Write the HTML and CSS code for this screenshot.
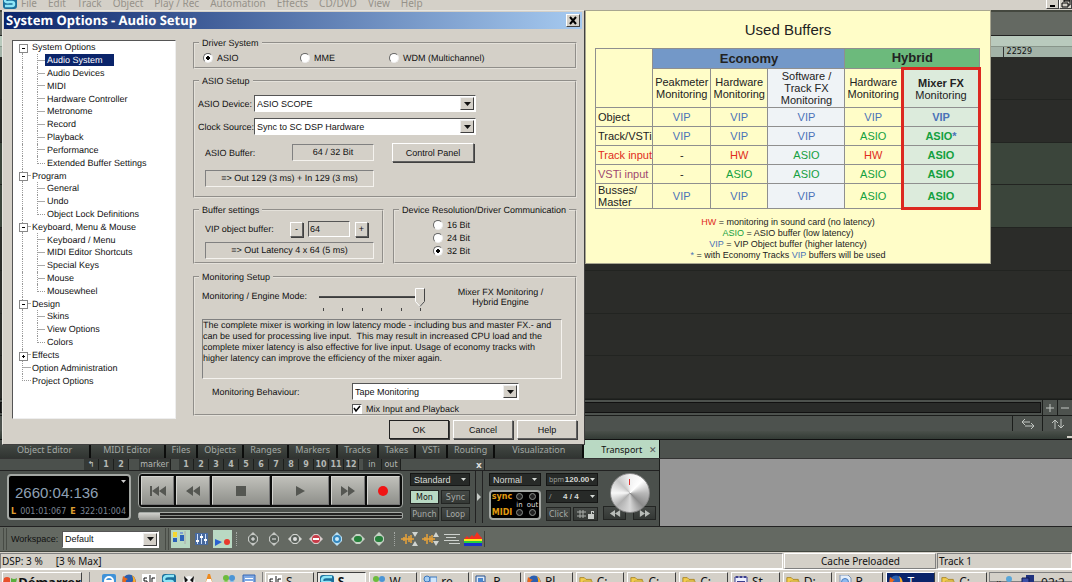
FILE: index.html
```html
<!DOCTYPE html>
<html lang="en">
<head>
  <meta charset="UTF-8" />
  <meta name="viewport" content="width=device-width, initial-scale=1.0" />
  <title>System Options - Audio Setup</title>
  <link rel="stylesheet" href="styles.css">
</head>
<body>
  <svg class="defs" aria-hidden="true">
    <symbol id="i-samp" viewBox="0 0 14 14"><rect width="14" height="14" rx="3" fill="#1b6f9c"/><path d="M12 2H6Q2 2 2 5t4 2h3q2 0 2 2t-2 2H2" fill="none" stroke="#8fe6f7" stroke-width="2.5"/></symbol>
    <symbol id="i-folder" viewBox="0 0 16 14"><path d="M1 13V2h5l2 2h6v9z" fill="#f3cd4e" stroke="#a8811c"/><path d="M3 13l2-7h10l-2 7z" fill="#fdf0a0" stroke="#b8922c"/></symbol>
    <symbol id="i-fox" viewBox="0 0 14 14"><circle cx="7" cy="7" r="6.5" fill="#2b5fb0"/><path d="M1 2q-2 8 3 11 6 2 9-3 2-5-2-8 1 4-1 6-3 3-6 0Q3 6 6 5 3 4 1 2z" fill="#e8671b"/><path d="M10 1q4 3 3 8l-2 2q1-5-1-10z" fill="#f7b22e"/></symbol>
    <symbol id="i-people" viewBox="0 0 14 14"><circle cx="4" cy="4" r="3" fill="#6dbb3d"/><path d="M0 14q0-7 4-7t5 7z" fill="#8fd05c"/><circle cx="10" cy="4" r="3" fill="#4b95d6"/><path d="M5 14q1-7 5-7t4 7z" fill="#7fbcec"/></symbol>
    <symbol id="i-chat" viewBox="0 0 14 14"><circle cx="4" cy="4" r="3" fill="#a6cdf2" stroke="#3b77bd"/><path d="M7 2h7v6h-4l-2 3V8H7z" fill="#cfe6fb" stroke="#3b77bd"/><path d="M0 14q0-6 4-6t5 6z" fill="#7fb2e6"/></symbol>
    <symbol id="i-pc" viewBox="0 0 14 14"><path d="M1 1h9v10H1z" fill="#dfeaf7" stroke="#27508f"/><path d="M3 3h5v5H3z" fill="#4a86cf"/><path d="M8 6l6 3-3 4-4-2z" fill="#27508f"/></symbol>
    <symbol id="i-note" viewBox="0 0 14 14"><path d="M1 2h12v12H1z" fill="#eef0ff" stroke="#3b3f8e"/><path d="M2 1h2v2H2zM6 1h2v2H6zM10 1h2v2h-2zM3 6h8v1H3zM3 9h8v1H3z" fill="#3b3f8e"/></symbol>
    <symbol id="i-doc" viewBox="0 0 14 14"><path d="M2 0h8l3 3v11H2z" fill="#e6effa" stroke="#7b93b5"/><circle cx="7" cy="7" r="3.5" fill="#8fbaf0" stroke="#4b7fc4"/></symbol>
    <symbol id="i-sc" viewBox="0 0 14 14"><path d="M0 0h14v14H0z" fill="#fff"/><path d="M5 4H2v3h3v4H1M8 1v11M13 4h-3v7h3" fill="none" stroke="#111"/></symbol>
    <symbol id="i-down" viewBox="0 0 7 4"><path d="M0 0h7L3.5 4z" fill="currentColor"/></symbol>
  </svg>

  <header class="menubar">
    <svg class="menu-logo" viewBox="0 5 14 9"><use href="#i-samp" width="14" height="14"/></svg>
    <nav>
      <a href="#">File</a><a href="#">Edit</a><a href="#">Track</a><a href="#">Object</a><a href="#">Play / Rec</a><a href="#">Automation</a><a href="#">Effects</a><a href="#">CD/DVD</a><a href="#">View</a><a href="#">Help</a>
    </nav>
    <button class="win-btn" aria-label="Minimize"><svg viewBox="0 0 12 8"><path d="M3 5h5v2H3z"/></svg></button>
    <button class="win-btn" aria-label="Restore"><svg viewBox="0 0 12 8"><path d="M4 0h6v5H8M4 0v2M4 1h6M2 3h6v4H2z" fill="none" stroke="#000"/></svg></button>
  </header>

  <main class="project">
    <div class="upper-bar"></div>
    <div class="ruler"></div>
    <div class="ruler marks"><span>22529</span></div>
    <div class="lanes">
      <div class="lane"></div>
      <div class="lane"></div>
      <div class="lane green"></div>
      <div class="lane green"></div>
      <div class="lane"></div>
      <div class="lane"></div>
      <div class="lane"></div>
      <div class="lane"></div>
    </div>
    <div class="scroll-row">
      <div class="scroll-slot"></div>
      <button aria-label="Zoom in"><svg viewBox="0 0 14 14"><path d="M7 3v8M3 7h8"/></svg></button>
      <button aria-label="Zoom out"><svg viewBox="0 0 14 14"><path d="M3 7h8"/></svg></button>
    </div>
    <div class="scroll-row tools">
      <div class="fill"></div>
      <button class="big" aria-label="Fit width"><svg viewBox="0 0 14 14"><path d="M9 5H1M4 2L1 5l3 3M4 9h9M10 6l3 3-3 3"/></svg></button>
      <button class="big" aria-label="Fit height"><svg viewBox="0 0 14 14"><path d="M4 12V3M1 6l3-3 3 3M10 2v9M7 8l3 3 3-3"/></svg></button>
    </div>
    <div class="splitter"><span></span></div>
  </main>

  <section class="dock">
    <nav class="tabs">
      <a class="wide" href="#">Object Editor</a><a class="mid" href="#">MIDI Editor</a><a href="#">Files</a><a href="#">Objects</a><a href="#">Ranges</a><a href="#">Markers</a><a href="#">Tracks</a><a href="#">Takes</a><a href="#">VSTi</a><a href="#">Routing</a><a class="wide" href="#">Visualization</a><a class="on" href="#">Transport <b>✕</b></a>
    </nav>
    <div class="transport">
      <div class="marker-row">
        <div class="marker-left">
          <button>↰</button><button>1</button><button>2</button>
          <button class="tag">marker</button>
          <button>1</button><button>2</button><button>3</button><button>4</button><button>5</button><button>6</button><button>7</button><button>8</button><button>9</button><button>10</button><button>11</button><button>12</button>
          <button class="io in">in</button><button class="io">out</button>
        </div>
        <button class="close" aria-label="Close">x</button>
        <div class="marker-right"></div>
      </div>
      <div class="deck">
        <div class="display">
          <div class="time">2660:04:136 <svg><use href="#i-down"/></svg></div>
          <div class="range"><b>L</b><span>001:01:067</span><b>E</b><span>322:01:004</span></div>
        </div>
        <div class="player">
          <div class="keys">
            <button aria-label="To start"><svg viewBox="0 0 18 12"><path d="M1 1h2v10H1zM10 1v10L3 6zM17 1v10l-7-5z"/></svg></button>
            <button aria-label="Rewind"><svg viewBox="0 0 18 12"><path d="M9 1v10L2 6zM16 1v10L9 6z"/></svg></button>
            <button class="long" aria-label="Stop"><svg viewBox="0 0 18 12"><path d="M4 1h10v10H4z"/></svg></button>
            <button class="long" aria-label="Play"><svg viewBox="0 0 18 12"><path d="M5 1v10l9-5z"/></svg></button>
            <button aria-label="Forward"><svg viewBox="0 0 18 12"><path d="M2 1v10l7-5zM9 1v10l7-5z"/></svg></button>
            <button aria-label="Record"><svg viewBox="0 0 18 12"><circle cx="9" cy="6" r="5" fill="#f01414"/></svg></button>
          </div>
          <div class="shuttle"><span></span></div>
        </div>
        <div class="modes">
          <label class="dark-combo"><select aria-label="Play mode"><option>Standard</option></select><svg><use href="#i-down"/></svg></label>
          <button class="lit">Mon</button><button>Sync</button>
          <button>Punch</button><button>Loop</button>
        </div>
        <button class="gutter" aria-label="Expand"><svg viewBox="0 0 4 8"><path d="M0 0v8l4-4z"/></svg></button>
        <div class="sync">
          <label class="dark-combo"><select aria-label="Speed"><option>Normal</option></select><svg><use href="#i-down"/></svg></label>
          <div class="leds">
            <b>sync</b><i></i><i></i>
            <small></small><small>in</small><small>out</small>
            <b>MIDI</b><i></i><i></i>
          </div>
        </div>
        <div class="tempo">
          <div class="readout"><small>bpm</small> 120.00 <svg><use href="#i-down"/></svg></div>
          <div class="readout"><small>/</small> 4 / 4 <svg><use href="#i-down"/></svg></div>
          <div class="pair">
            <button>Click</button>
            <button aria-label="Grid lock"><svg viewBox="0 0 18 10"><path d="M3 1v8M6 1v8M0 3h9M0 7h9" fill="none" stroke="#aaaeaa"/><path d="M11 5h6v5h-6zM14 5V2h3v2h-1V3h-1v2z" fill="#c8ccc8"/></svg></button>
          </div>
        </div>
        <div class="jog">
          <div class="knob"><span></span></div>
          <div class="pair">
            <button aria-label="Nudge left"><svg viewBox="0 0 14 8"><path d="M7 0v8L1 4zM13 0v8L7 4z"/></svg></button>
            <button aria-label="Nudge right"><svg viewBox="0 0 14 8"><path d="M1 0v8l6-4zM7 0v8l6-4z"/></svg></button>
          </div>
        </div>
      </div>
    </div>
  </section>

  <section class="toolbar">
    <span class="grip"></span>
    <label for="workspace">Workspace:</label>
    <div class="combo workspace"><select id="workspace"><option>Default</option></select><span class="arrow"><svg><use href="#i-down"/></svg></span></div>
    <span class="grip"></span>
    <div class="views">
      <button class="lit" aria-label="Workspace view"><svg viewBox="0 0 19 18"><path d="M2 2h4v5H2z" fill="#f5d730"/><path d="M2 8h4v4H2zM9 5h4v6H9z" fill="#2c62b8"/><path d="M9 2h3v2H9z" fill="#7fa0d0"/><path d="M14 1v13" stroke="#aaa"/></svg></button>
      <button aria-label="Mixer"><svg viewBox="0 0 19 18"><path d="M3 3h13v12H3z" fill="#47699e"/><path d="M5.5 4v10M9.5 4v10M13.5 4v10" stroke="#cfe0fa"/><path d="M4 10h3v2H4zM8 6h3v2H8zM12 9h3v2h-3z" fill="#fff"/></svg></button>
      <button class="lit" aria-label="Transport"><svg viewBox="0 0 19 18"><path d="M2 9v7l7-4z" fill="#2a62d0"/><circle cx="14" cy="12" r="3" fill="#e8392c"/></svg></button>
    </div>
    <span class="dots"></span>
    <div class="zooms">
      <button aria-label="Zoom in vertically"><svg viewBox="0 0 14 14"><path d="M7 0l5 5v4l-5 5-5-5V5z" fill="#c5c8c4"/><circle cx="7" cy="7" r="4" fill="#59605a"/><path d="M7 5v4M5 7h4" stroke="#eee"/></svg></button>
      <button aria-label="Zoom out vertically"><svg viewBox="0 0 14 14"><path d="M7 0l5 5v4l-5 5-5-5V5z" fill="#c5c8c4"/><circle cx="7" cy="7" r="4" fill="#59605a"/><path d="M5 7h4" stroke="#eee"/></svg></button>
      <button aria-label="Show all"><svg viewBox="0 0 14 14"><path d="M0 7l5-5h4l5 5-5 5H5z" fill="#d2d4d0"/><circle cx="7" cy="7" r="4" fill="#59605a"/><circle cx="7" cy="7" r="2" fill="#ddd"/></svg></button>
      <button aria-label="Zoom range"><svg viewBox="0 0 14 14"><path d="M0 7l5-5h4l5 5-5 5H5z" fill="#d8cccb"/><circle cx="7" cy="7" r="4" fill="#c83b48"/><path d="M4 7h6" stroke="#fff" stroke-width="2"/></svg></button>
      <button aria-label="Zoom object"><svg viewBox="0 0 14 14"><path d="M7 0l5 5v4l-5 5-5-5V5z" fill="#b9dff2"/><circle cx="7" cy="7" r="4" fill="#3487bd"/><circle cx="7" cy="7" r="2" fill="#cdeaf8"/></svg></button>
      <button aria-label="Undo zoom"><svg viewBox="0 0 14 14"><path d="M0 7l5-5h4l5 5-5 5H5z" fill="#c5d0c4"/><rect x="3" y="4" width="8" height="6" rx="3" fill="#26803b"/></svg></button>
      <button aria-label="Redo zoom"><svg viewBox="0 0 14 14"><path d="M7 0l5 5v4l-5 5-5-5V5z" fill="#c5d0c4"/><rect x="3" y="4" width="8" height="6" rx="3" fill="#26803b"/></svg></button>
    </div>
    <span class="dots"></span>
    <div class="waves">
      <button aria-label="Wave zoom out"><svg viewBox="0 0 18 16"><path d="M0 8h13M3 6v4M5 3v10M8 5v6M10 4v8" stroke="#e8a33a" stroke-width="1.5"/><path d="M11 1h6l-3 5zM11 15h6l-3-5z" fill="#d0d4d0"/></svg></button>
      <button aria-label="Wave zoom in"><svg viewBox="0 0 18 16"><path d="M0 8h13M3 6v4M5 3v10M8 5v6M10 4v8" stroke="#e8a33a" stroke-width="1.5"/><path d="M11 6h6l-3-5zM11 10h6l-3 5z" fill="#d0d4d0"/></svg></button>
      <button aria-label="Tracks"><svg viewBox="0 0 18 16"><path d="M1 3.5h16M3 6.5h10M1 9.5h15M6 12.5h11" stroke="#cdd1cd"/></svg></button>
      <button aria-label="Spectrum"><svg viewBox="0 0 18 16"><path d="M0 8l3-3 2 2 3-3 2 2 3-5 3 4 2 2v3H0z" fill="#f03020"/><path d="M0 8h18v2H0z" fill="#ffe81c"/><path d="M0 10h18v3H0z" fill="#28d03c"/><path d="M0 12h18v3H0z" fill="#1a30c8"/></svg></button>
    </div>
  </section>

  <footer class="status">
    <div class="cell main"><span>DSP: 3 %</span><span>[3 % Max]</span></div>
    <div class="cell raised">Cache Preloaded</div>
    <div class="cell track">Track 1</div>
  </footer>

  <footer class="taskbar">
    <button class="start"><svg viewBox="0 0 14 14"><path d="M1 3q3-2 6 0v5Q4 6 0 8z" fill="#e8502a"/><path d="M8 3q3 2 6 0l-1 5q-3 2-5 0z" fill="#5aae3c"/><path d="M0 9q3-2 6 0v5H0z" fill="#2f6fd0"/><path d="M7 9q3 2 6 0v5H7z" fill="#f2c02c"/></svg>Démarrer</button>
    <div class="quick">
      <svg viewBox="0 0 14 14"><rect width="14" height="14" rx="2" fill="#3f92d8"/><circle cx="7" cy="7" r="4" fill="none" stroke="#fff" stroke-width="2"/><path d="M4 7h7" stroke="#fff" stroke-width="2"/></svg>
      <svg><use href="#i-fox"/></svg>
      <svg><use href="#i-sc"/></svg>
      <svg><use href="#i-samp"/></svg>
      <svg viewBox="0 0 14 14"><circle cx="7" cy="8" r="6" fill="#f4f4f4"/><path d="M2 2l4 4-3 3zM12 2L8 6l3 3z" fill="#111"/></svg>
      <svg viewBox="0 0 14 14"><path d="M6 0h2l4 14H2z" fill="#ee8a1e"/><path d="M5 5h4l1 3H4z" fill="#fff"/></svg>
      <svg><use href="#i-people"/></svg>
      <svg viewBox="0 0 14 14"><path d="M1 1h12v13H1z" fill="#7fa9e4" stroke="#3968b4"/><path d="M3 4h8v1H3zM3 7h8v1H3z" fill="#fff"/></svg>
    </div>
    <div class="tasks">
      <button><svg><use href="#i-sc"/></svg>S</button>
      <button class="down"><svg><use href="#i-samp"/></svg>S</button>
      <button><svg><use href="#i-people"/></svg>W</button>
      <button><svg><use href="#i-chat"/></svg>re</button>
      <button><svg><use href="#i-pc"/></svg>P</button>
      <button><svg><use href="#i-fox"/></svg>Pl</button>
      <button><svg><use href="#i-folder"/></svg>C:</button>
      <button><svg><use href="#i-folder"/></svg>C:</button>
      <button><svg><use href="#i-folder"/></svg>C:</button>
      <button><svg><use href="#i-note"/></svg>St</button>
      <button><svg><use href="#i-folder"/></svg>D:</button>
      <button><svg><use href="#i-doc"/></svg>P</button>
      <button class="navy"><svg><use href="#i-fox"/></svg>T</button>
      <button><svg><use href="#i-folder"/></svg>C:</button>
    </div>
    <div class="tray">
      <span>«</span>
      <svg viewBox="0 0 14 14"><circle cx="5" cy="4" r="3" fill="#5aa6d8"/><path d="M0 13q0-6 5-6t5 6z" fill="#5aa6d8"/><path d="M9 9h5v4H9z" fill="#3fae4a"/></svg>
      <svg viewBox="0 0 14 14"><path d="M5 0h8v8H5z" fill="#20327e"/><path d="M1 3h7v8H1z" fill="#3c4fa8" stroke="#111a50"/></svg>
      <time>02:2</time>
    </div>
  </footer>

  <!-- options dialog -->
  <form class="dialog">
    <div class="titlebar"><h1>System Options - Audio Setup</h1><button type="button" aria-label="Close"><svg viewBox="0 0 12 11"><path d="M3 2l6 7M9 2L3 9" stroke="#000" stroke-width="2"/></svg></button></div>
    <div class="dialog-body">
      <ul class="tree">
        <li class="root open first">System Options</li>
        <li><a href="#" class="picked">Audio System</a></li>
        <li>Audio Devices</li>
        <li>MIDI</li>
        <li>Hardware Controller</li>
        <li>Metronome</li>
        <li>Record</li>
        <li>Playback</li>
        <li>Performance</li>
        <li class="last">Extended Buffer Settings</li>
        <li class="root open">Program</li>
        <li>General</li>
        <li>Undo</li>
        <li class="last">Object Lock Definitions</li>
        <li class="root open">Keyboard, Menu &amp; Mouse</li>
        <li>Keyboard / Menu</li>
        <li>MIDI Editor Shortcuts</li>
        <li>Special Keys</li>
        <li>Mouse</li>
        <li class="last">Mousewheel</li>
        <li class="root open">Design</li>
        <li>Skins</li>
        <li>View Options</li>
        <li class="last">Colors</li>
        <li class="root shut">Effects</li>
        <li class="root">Option Administration</li>
        <li class="root end">Project Options</li>
      </ul>

      <div class="settings">
        <fieldset class="driver">
          <legend>Driver System</legend>
          <label><input type="radio" name="driver" checked> ASIO</label>
          <label><input type="radio" name="driver"> MME</label>
          <label><input type="radio" name="driver"> WDM (Multichannel)</label>
        </fieldset>

        <fieldset class="asio">
          <legend>ASIO Setup</legend>
          <div class="field">
            <label for="device">ASIO Device:</label>
            <div class="combo"><select id="device"><option>ASIO SCOPE</option></select><span class="arrow"><svg><use href="#i-down"/></svg></span></div>
          </div>
          <div class="field">
            <label for="clock">Clock Source:</label>
            <div class="combo"><select id="clock"><option>Sync to SC DSP Hardware</option></select><span class="arrow"><svg><use href="#i-down"/></svg></span></div>
          </div>
          <div class="buffer-row">
            <span>ASIO Buffer:</span>
            <output class="sunk">64 / 32 Bit</output>
            <button type="button" class="btn">Control Panel</button>
          </div>
          <output class="sunk latency">=&gt; Out 129 (3 ms) + In 129 (3 ms)</output>
        </fieldset>

        <div class="two">
          <fieldset class="vip">
            <legend>Buffer settings</legend>
            <div class="vip-row">
              <label for="vip">VIP object buffer:</label>
              <button type="button" class="btn step">-</button>
              <input type="text" id="vip" value="64">
              <button type="button" class="btn step">+</button>
            </div>
            <output class="sunk latency">=&gt; Out Latency 4 x 64 (5 ms)</output>
          </fieldset>
          <fieldset class="bits">
            <legend>Device Resolution/Driver Communication</legend>
            <label><input type="radio" name="bits"> 16 Bit</label>
            <label><input type="radio" name="bits"> 24 Bit</label>
            <label><input type="radio" name="bits" checked> 32 Bit</label>
          </fieldset>
        </div>

        <fieldset class="monitor">
          <legend>Monitoring Setup</legend>
          <div class="engine">
            <label for="engine">Monitoring / Engine Mode:</label>
            <div class="slider">
              <input type="range" id="engine" min="0" max="5" value="5">
              <div class="ticks"><i></i><i></i><i></i><i></i><i></i><i></i></div>
            </div>
            <p>Mixer FX Monitoring /<br>Hybrid Engine</p>
          </div>
          <div class="sunk info">The complete mixer is working in low latency mode - including bus and master FX.- and can be used for processing live input.&nbsp; This may result in increased CPU load and the complete mixer latency is also effective for live input. Usage of economy tracks with higher latency can improve the efficiency of the mixer again.</div>
          <div class="behave">
            <label for="behave">Monitoring Behaviour:</label>
            <div class="combo"><select id="behave"><option>Tape Monitoring</option></select><span class="arrow"><svg><use href="#i-down"/></svg></span></div>
            <label class="mix"><input type="checkbox" checked> Mix Input and Playback</label>
          </div>
        </fieldset>

        <div class="actions">
          <button type="button" class="btn default">OK</button>
          <button type="button" class="btn">Cancel</button>
          <button type="button" class="btn">Help</button>
        </div>
      </div>
    </div>
  </form>

  <!-- buffer overview tooltip -->
  <aside class="buffers">
    <h2>Used Buffers</h2>
    <table>
      <colgroup><col class="c-name"><col class="c-std"><col class="c-std"><col class="c-wide"><col class="c-std"><col class="c-wide"></colgroup>
      <thead>
        <tr class="groups"><th rowspan="2"></th><th colspan="3" class="economy">Economy</th><th colspan="2" class="hybrid">Hybrid</th></tr>
        <tr class="kinds"><th>Peakmeter Monitoring</th><th>Hardware Monitoring</th><th class="soft">Software /<br>Track FX Monitoring</th><th>Hardware Monitoring</th><th class="fx"><b>Mixer FX</b><br>Monitoring</th></tr>
      </thead>
      <tbody>
        <tr><th>Object</th><td class="v">VIP</td><td class="v">VIP</td><td class="v soft">VIP</td><td class="v">VIP</td><td class="v fx">VIP</td></tr>
        <tr><th>Track/VSTi</th><td class="v">VIP</td><td class="v">VIP</td><td class="v soft">VIP</td><td class="a">ASIO</td><td class="a fx star">ASIO</td></tr>
        <tr><th class="h">Track input</th><td>-</td><td class="h">HW</td><td class="a soft">ASIO</td><td class="h">HW</td><td class="a fx">ASIO</td></tr>
        <tr><th class="p">VSTi input</th><td>-</td><td class="a">ASIO</td><td class="a soft">ASIO</td><td class="a">ASIO</td><td class="a fx">ASIO</td></tr>
        <tr class="tall"><th>Busses/<br>Master</th><td class="v">VIP</td><td class="v">VIP</td><td class="v soft">VIP</td><td class="a">ASIO</td><td class="a fx bottom">ASIO</td></tr>
      </tbody>
    </table>
    <p><span class="h">HW</span> = monitoring in sound card (no latency)<br>
      <span class="a">ASIO</span> = ASIO buffer (low latency)<br>
      <span class="v">VIP</span> = VIP Object buffer (higher latency)<br>
      <span class="v">*</span> = with Economy Tracks <span class="v">VIP</span> buffers will be used</p>
  </aside>
</body>
</html>
```
FILE: styles.css
```css
* {
  box-sizing: border-box;
}
body {
  margin: 0;
  height: 100vh;
  overflow: hidden;
  position: relative;
  display: flex;
  flex-direction: column;
  background: #2b2c29;
  color: #111;
  font: 9px "Liberation Sans", Arial, sans-serif;
}
button, select, input {
  font: inherit;
  color: inherit;
  margin: 0;
  padding: 0;
  border: none;
  background: none;
}
button {
  display: flex;
  align-items: center;
  justify-content: center;
}
a {
  color: inherit;
  text-decoration: none;
}
svg {
  display: block;
  flex: none;
}
.defs {
  position: absolute;
  width: 0;
  height: 0;
}

/* menu */
.menubar {
  flex: none;
  display: flex;
  height: 10px;
  overflow: hidden;
  background: #d4d0c8;
  color: #96928a;
  font: 10px/6px "Noto Sans", sans-serif;
}
.menu-logo {
  width: 14px;
  height: 9px;
  margin: 0 4px 0 3px;
}
.menubar nav {
  flex: 1;
  display: flex;
  gap: 11px;
}
.win-btn {
  width: 13px;
  height: 9px;
  border: 1px solid #fff;
  border-width: 0 1px 1px;
  border-color: #fff #404040 #404040 #fff;
}
.win-btn svg {
  width: 12px;
  height: 8px;
}

/* arranger behind the dialog */
.project {
  flex: 1;
  display: flex;
  flex-direction: column;
}
.upper-bar {
  height: 26px;
  background: #646962;
  border-top: 2px solid #44483f;
  border-bottom: 1px solid #222;
}
.ruler {
  height: 10px;
  background: #b9cabd;
}
.ruler.marks {
  height: 11px;
  background: #a3b3a8;
  border-top: 1px solid #88958a;
  font: 8px/10px "DejaVu Sans", sans-serif;
  text-align: right;
}
.marks span {
  display: inline-block;
  border-left: 1px solid #333;
  padding-left: 3px;
  margin-right: 40px;
}
.lanes {
  flex: 1;
  display: flex;
  flex-direction: column;
}
.lane {
  flex: 1;
  border-bottom: 1px solid #222421;
  background: #2b2c29;
}
.lane.green {
  background: #3b453b;
}
.scroll-row {
  display: flex;
  height: 16px;
  background: #4d524e;
  border-top: 1px solid #1b1d1b;
}
.scroll-slot {
  flex: 1;
  margin: 2px 1px 2px 0;
  background: #292b29;
  border: 1px solid #111;
}
.scroll-row .fill {
  flex: 1;
}
.scroll-row button {
  width: 15px;
  border-left: 1px solid #1b1d1b;
}
.scroll-row .big {
  width: 30px;
}
.scroll-row svg {
  width: 14px;
  height: 14px;
  fill: none;
  stroke: #c2c6c2;
}
.splitter {
  height: 9px;
  display: flex;
  justify-content: flex-end;
  align-items: flex-end;
  background: linear-gradient(#4a504a, #333b35);
  border-bottom: 1px solid #111;
}
.splitter span {
  width: 5px;
  height: 2px;
  margin-bottom: 1px;
  background: #d4d0c8;
}

/* dock: tabs and transport */
.dock {
  flex: none;
  background: #969696;
}
.tabs {
  display: flex;
  height: 19px;
  background: #4d524e;
  border-bottom: 1px solid #333;
  color: #a3a9a5;
  font: 9px/18px "Noto Sans", sans-serif;
}
.tabs a {
  padding: 1px 6px 0;
  border-right: 2px solid #0c0d0c;
  background: linear-gradient(#4a4f4b, #303431);
}
.tabs .mid {
  padding: 1px 12px 0;
}
.tabs .wide {
  padding: 1px 17px 0;
}
.tabs .on {
  padding: 1px 2px 0 17px;
  border-right-width: 1px;
  background: #b9d9c3;
  color: #111;
}
.on b {
  margin-left: 4px;
  font-weight: normal;
  color: #555;
}
.transport {
  width: 660px;
  height: 67px;
  background: #4b504c;
  border-right: 1px solid #1d1f1d;
  color: #a8aca8;
  font: 9px "DejaVu Sans", sans-serif;
}
.marker-row {
  display: flex;
  height: 12px;
  border-bottom: 1px solid #222;
}
.marker-left {
  flex: none;
  width: 476px;
  display: flex;
  padding-left: 84px;
}
.marker-left button {
  width: 15px;
  height: 11px;
  background: #353936;
  border-right: 1px solid #1d1f1d;
  color: #b4b8b4;
  font-size: 8px;
  font-weight: bold;
}
.marker-left .tag {
  width: 32px;
  margin: 0 8px 0 10px;
  font-weight: normal;
}
.marker-left .io {
  width: 19px;
  font-weight: normal;
}
.marker-left .in {
  margin-left: 4px;
}
.marker-row .close {
  width: 6px;
  color: #ddd;
  font-weight: bold;
}
.marker-right {
  flex: 1;
  margin-left: 2px;
  border-left: 1px solid #222;
}
.deck {
  display: flex;
  height: 52px;
  padding-left: 7px;
}
.display {
  width: 124px;
  height: 46px;
  margin-top: 3px;
  padding: 4px 3px 0 2px;
  display: flex;
  flex-direction: column;
  background: #000;
  border: 2px solid #a4a8a4;
  border-radius: 4px;
}
.time {
  display: flex;
  justify-content: space-between;
  padding-left: 4px;
  color: #8fa0b4;
  font: 15px/26px "Liberation Sans", sans-serif;
}
.time svg {
  width: 5px;
  height: 3px;
  color: #ccc;
}
.range {
  display: flex;
  justify-content: space-between;
  color: #7c8694;
  font: 8px/12px "DejaVu Sans", sans-serif;
}
.range b {
  color: #e0a030;
}
.player {
  width: 265px;
  margin: 2px 7px 0;
}
.keys {
  display: flex;
  gap: 2px;
  height: 35px;
  padding: 2px;
  background: #0d0e0d;
  border: 1px solid #a4a8a4;
  border-radius: 4px;
}
.keys button {
  flex: 34;
  background: linear-gradient(#c0c0ba, #8f908b);
  border: 1px solid #d4d4d0;
  border-color: #d4d4d0 #777 #777 #d4d4d0;
}
.keys .long {
  flex: 60;
}
.keys svg {
  width: 18px;
  height: 12px;
  fill: #555752;
}
.shuttle {
  height: 7px;
  margin-top: 4px;
  background: linear-gradient(#222 2px, #8a8e8a 2px, #8a8e8a 3px, #222 3px);
  border: 1px solid #a4a8a4;
  border-radius: 2px;
}
.shuttle span {
  display: block;
  width: 21px;
  height: 7px;
  background: linear-gradient(#d0d0cc, #999994);
}
.modes {
  width: 60px;
  display: grid;
  grid-template: 14px 14px 14px / 1fr 1fr;
  gap: 3px 2px;
  align-content: start;
  margin-top: 2px;
}
.modes .dark-combo {
  grid-column: span 2;
}
.dark-combo, .readout {
  display: flex;
  align-items: center;
  height: 13px;
  padding: 0 3px;
  background: #272a28;
  border: 1px solid #151615;
  color: #d6dad6;
  font: bold 8px "DejaVu Sans", sans-serif;
}
.dark-combo select {
  flex: 1;
  min-width: 0;
  appearance: none;
  outline: none;
  font: 9px "Liberation Sans", sans-serif;
}
.dark-combo svg, .readout svg {
  width: 5px;
  height: 3px;
}
.modes button, .pair button {
  height: 14px;
  background: linear-gradient(#464a47, #343835);
  border: 1px solid #232523;
  font-size: 8px;
}
.modes .lit {
  background: #b9d9c3;
  color: #111;
}
.gutter {
  width: 8px;
  margin-left: 5px;
  border: 1px solid #222;
  border-width: 0 1px;
}
.gutter svg {
  width: 4px;
  height: 8px;
  fill: #c8ccc8;
}
.sync {
  width: 52px;
  margin: 2px 5px 0 6px;
}
.leds {
  display: grid;
  grid-template: 9px 7px 9px / 22px 1fr 1fr;
  place-items: center;
  height: 30px;
  margin-top: 4px;
  background: #000;
  border: 2px solid #a4a8a4;
  border-radius: 4px;
}
.leds b {
  color: #e09a10;
  font-size: 8px;
}
.leds i {
  width: 7px;
  height: 7px;
  border: 1px solid #8b8f8b;
  border-radius: 50%;
  background: #222;
}
.leds small {
  color: #ddd;
  font-size: 7px;
}
.tempo {
  width: 52px;
  display: flex;
  flex-direction: column;
  gap: 4px;
  margin-top: 2px;
}
.readout {
  justify-content: space-between;
  white-space: nowrap;
  padding: 0 2px;
  font: bold 8px "Liberation Sans", sans-serif;
}
.readout small {
  color: #9a9e9a;
  font: 7px "Noto Sans", sans-serif;
}
.pair {
  display: grid;
  grid-template-columns: 1fr 1fr;
  gap: 2px;
}
.pair svg {
  width: 18px;
  height: 10px;
}
.jog {
  flex: 1;
  margin: 2px 3px 0 5px;
}
.knob {
  position: relative;
  width: 40px;
  height: 40px;
  margin: 0 auto -7px;
  border-radius: 50%;
  border: 1px solid #888;
  background: conic-gradient(#f2f2f2, #ffffff, #b8b8b8, #8c8c8c, #d8d8d8, #b0b0b0, #f8f8f8, #c6c6c6, #f2f2f2);
}
.knob span {
  display: block;
  width: 1px;
  height: 6px;
  margin: 5px auto;
  background: #d33;
}
.jog .pair {
  gap: 7px;
}
.jog .pair svg {
  width: 12px;
  height: 7px;
  fill: #b8bcb8;
}

/* workspace toolbar */
.toolbar {
  flex: none;
  display: flex;
  align-items: center;
  height: 26px;
  padding-left: 3px;
  background: #646962;
  border-top: 1px solid #222;
  border-bottom: 1px solid #42463f;
}
.grip {
  width: 4px;
  height: 22px;
  border: 1px solid #474b45;
  border-width: 0 1px;
}
.toolbar label {
  width: 50px;
  margin: 0 1px 0 4px;
}
.workspace {
  width: 97px;
  margin-right: 6px;
}
.toolbar button svg {
  width: 19px;
  height: 18px;
}
.views {
  display: flex;
  gap: 2px;
  margin-left: 2px;
}
.views .lit {
  background: #b9d9c3;
}
.dots {
  height: 14px;
  margin: 0 9px 0 4px;
  border-left: 1px dotted #a4a8a4;
}
.zooms {
  display: flex;
  gap: 7px;
}
.zooms button svg {
  width: 14px;
  height: 14px;
}
.zooms + .dots {
  margin: 0 6px 0 8px;
}
.waves {
  display: flex;
  gap: 3px;
  padding-right: 2px;
  border-right: 1px solid #3c403a;
}
.waves button svg {
  width: 18px;
  height: 16px;
}

/* status bar */
.status {
  flex: none;
  display: flex;
  gap: 1px;
  height: 17px;
  padding-top: 1px;
  background: #d4d0c8;
  font: 10px/14px "Noto Sans", sans-serif;
}
.cell {
  border: 1px solid #808080;
  border-color: #808080 #fff #fff #808080;
  padding-left: 1px;
}
.cell.main {
  flex: 1;
  display: flex;
  gap: 13px;
}
.cell.raised {
  width: 152px;
  border-color: #fff #808080 #808080 #fff;
  text-align: center;
}
.cell.track {
  width: 135px;
}

/* taskbar, lower part is off screen */
.taskbar {
  flex: none;
  display: flex;
  height: 13px;
  padding: 2px 0 0 2px;
  overflow: hidden;
  background: #d4d0c8;
  border-top: 1px solid #fff;
  font: 12px/20px "Noto Sans", sans-serif;
}
.taskbar svg {
  width: 14px;
  height: 14px;
}
.start, .tasks button {
  height: 20px;
  border: 1px solid #fff;
  border-color: #fff #404040 #404040 #fff;
}
.start {
  width: 80px;
  gap: 1px;
  font-size: 13px;
  font-weight: bold;
}
.quick {
  display: flex;
  gap: 6px;
  margin-left: 7px;
  padding: 2px 6px 0 12px;
  border: 1px solid #808080;
  border-width: 0 1px;
}
.tasks {
  flex: 1;
  display: flex;
  gap: 3px;
  margin: 0 2px;
}
.tasks button {
  flex: 1;
  gap: 4px;
  justify-content: flex-start;
  padding-left: 2px;
}
.tasks .down {
  background: #ecebe7;
  border-color: #404040 #fff #fff #404040;
  font-weight: bold;
}
.tasks .navy {
  background: #0a246a;
  color: #fff;
}
.tray {
  width: 83px;
  display: flex;
  gap: 3px;
  padding-left: 5px;
  border: 1px solid #808080;
  border-right: none;
  white-space: nowrap;
}
.tray svg {
  margin-top: 2px;
}
.tray time {
  margin-left: 3px;
}

/* dialog */
.dialog {
  position: absolute;
  left: 2px;
  top: 10px;
  width: 583px;
  padding: 1px 2px 5px 1px;
  background: #d4d0c8;
  border: 1px solid #fff;
  border-color: #e8e6e0 #404040 #404040 #e8e6e0;
  text-rendering: geometricPrecision;
}
.titlebar {
  display: flex;
  align-items: center;
  height: 17px;
  padding: 0 2px;
  background: linear-gradient(90deg, #0a246a, #a6caf0);
}
.titlebar h1 {
  flex: 1;
  margin: 0;
  color: #fff;
  font: bold 13px/17px "Noto Sans", sans-serif;
}
.titlebar button {
  width: 14px;
  height: 13px;
  background: #d4d0c8;
  border: 1px solid #fff;
  border-color: #fff #404040 #404040 #fff;
}
.titlebar button svg {
  width: 12px;
  height: 11px;
}
.dialog-body {
  display: flex;
  gap: 17px;
  padding: 8px 5px 0 8px;
}
.tree {
  width: 164px;
  display: flex;
  flex-direction: column;
  list-style: none;
  margin: 3px 0 20px;
  padding: 0 0 31px 6px;
  background: #fff;
  border: 1px solid #555;
  border-color: #555 #eee #eee #555;
}
.tree li {
  position: relative;
  flex: 1 1 0;
  min-height: 0;
  display: flex;
  align-items: center;
  padding-left: 28px;
  line-height: 12px;
  white-space: nowrap;
}
.tree .root {
  padding-left: 13px;
}
.picked {
  width: 69px;
  margin-left: -2px;
  padding-left: 2px;
  background: #0a246a;
  color: #fff;
}
/* branch lines */
.tree li::before {
  content: "";
  position: absolute;
  left: 3px;
  top: 0;
  bottom: 0;
  border-left: 1px dotted #999;
}
.tree li:not(.root)::after {
  content: "";
  position: absolute;
  left: 18px;
  top: 0;
  width: 7px;
  height: 100%;
  border-left: 1px dotted #999;
  background: linear-gradient(90deg, #aaa, #aaa) 0 50% / 7px 1px no-repeat;
}
.tree .last:not(.root)::after {
  height: 50%;
  background: none;
  border-bottom: 1px dotted #999;
}
.tree .root::before {
  width: 8px;
  background: linear-gradient(90deg, #aaa, #aaa) 0 50% / 8px 1px no-repeat;
}
.tree .first::before {
  top: 50%;
  background: none;
}
.tree .end::before {
  bottom: 50%;
  background: none;
  border-bottom: 1px dotted #999;
}
.tree .open::after, .tree .shut::after {
  content: "";
  position: absolute;
  left: 0;
  top: 3px;
  width: 7px;
  height: 7px;
  border: 1px solid #888;
  background: linear-gradient(#000, #000) 50% 50% / 3px 1px no-repeat, #fff;
}
.tree .shut::after {
  background: linear-gradient(#000, #000) 50% 50% / 3px 1px no-repeat, linear-gradient(#000, #000) 50% 50% / 1px 3px no-repeat, #fff;
}
.settings {
  flex: 1;
  display: flex;
  flex-direction: column;
  gap: 6px;
}
fieldset {
  min-width: 0;
  margin: 0;
  padding: 0;
  border: 2px groove #e4e1da;
}
legend {
  margin-left: 4px;
  padding: 0 3px;
  line-height: 12px;
  white-space: nowrap;
}
.driver legend {
  margin-left: -4px;
}
.monitor legend {
  margin-left: -3px;
}
.asio legend, .vip legend {
  margin-left: 1px;
}
input[type="radio"] {
  appearance: none;
  width: 10px;
  height: 10px;
  border: 1px solid #777;
  border-color: #666 #eee #eee #666;
  border-radius: 50%;
  background: #fff;
}
input[type="radio"]:checked {
  background: radial-gradient(#000 0 2px, #fff 2px);
}
.driver, .driver label, .bits label, .mix {
  display: flex;
  align-items: center;
  gap: 4px;
}
.driver {
  display: grid;
  grid-template-columns: 97px 89px 1fr;
  gap: 0;
  height: 32px;
  padding: 3px 0 0 8px;
}
.driver label {
  height: 12px;
}
.asio {
  height: 123px;
  padding: 8px 3px 0;
}
.field {
  display: flex;
  align-items: center;
  height: 17px;
  margin-bottom: 6px;
}
.field label {
  width: 56px;
  white-space: nowrap;
}
.field .combo {
  width: 222px;
}
.combo {
  display: flex;
  height: 17px;
  background: #fff;
  border: 1px solid #fff;
  border-color: #555 #fff #fff #555;
  color: #111;
}
.combo select {
  flex: 1;
  min-width: 0;
  appearance: none;
  padding-left: 2px;
  outline: none;
}
.arrow {
  width: 14px;
  display: flex;
  align-items: center;
  justify-content: center;
  margin: 1px;
  background: #d4d0c8;
  border: 1px solid #eee;
  border-color: #eee #404040 #404040 #eee;
}
.arrow svg {
  width: 7px;
  height: 4px;
}
.buffer-row {
  display: grid;
  grid-template-columns: 87px 82px 82px;
  align-items: center;
  height: 19px;
  margin: 8px 0 8px 7px;
}
.buffer-row .btn {
  margin-left: 18px;
  width: 82px;
  height: 19px;
}
.sunk {
  display: block;
  height: 17px;
  border: 1px solid #808080;
  border-color: #808080 #f4f2ee #f4f2ee #808080;
  line-height: 15px;
  text-align: center;
}
.latency {
  width: 169px;
  margin-left: 7px;
}
.btn {
  background: #d4d0c8;
  border: 1px solid #fff;
  border-color: #fff #606060 #606060 #fff;
  box-shadow: 1px 1px 0 #404040;
}
.two {
  display: flex;
  gap: 9px;
}
.vip {
  width: 191px;
  height: 60px;
  padding: 5px 3px 0;
}
.vip-row {
  display: flex;
  align-items: center;
  gap: 5px;
  height: 16px;
  margin: 0 0 5px 7px;
}
.vip-row label {
  width: 80px;
}
.step {
  width: 13px;
  height: 15px;
}
.vip-row input {
  width: 42px;
  height: 16px;
  padding-left: 1px;
  border: 1px solid #555;
  border-color: #555 #fff #fff #555;
}
.bits {
  flex: 1;
  height: 60px;
  padding-top: 2px;
}
.bits label {
  height: 13px;
  padding-left: 38px;
}
.monitor {
  height: 145px;
  margin-top: 1px;
  padding: 4px 7px 0;
}
.engine {
  display: flex;
  height: 32px;
}
.engine label {
  width: 117px;
  line-height: 18px;
}
.slider {
  width: 106px;
}
.slider input {
  display: block;
  appearance: none;
  width: 106px;
  height: 20px;
  background: linear-gradient(#555, #333) 0 50% / 100% 2px no-repeat;
}
.slider input::-webkit-slider-thumb {
  appearance: none;
  width: 10px;
  height: 19px;
  background: url("data:image/svg+xml,%3Csvg xmlns='http://www.w3.org/2000/svg' viewBox='0 0 10 19'%3E%3Cpath d='M.5.5h9v13l-4.5 5-4.5-5z' fill='%23d4d0c8' stroke='%23fff'/%3E%3Cpath d='M9.5.5v13l-4.5 5' fill='none' stroke='%23444'/%3E%3C/svg%3E");
}
.ticks {
  display: flex;
  justify-content: space-between;
  padding: 1px 4px;
}
.ticks i {
  width: 1px;
  height: 3px;
  background: #444;
}
.engine p {
  flex: 1;
  margin: 0;
  padding-left: 8px;
  line-height: 10px;
  text-align: center;
}
.monitor .info {
  width: 360px;
  height: 60px;
  line-height: 11px;
  text-align: left;
}
.behave {
  display: grid;
  grid-template: 17px 12px / 140px 167px;
  gap: 3px 0;
  align-items: center;
  margin: 4px 0 0 10px;
}
.mix {
  grid-column: 2;
}
.mix input {
  appearance: none;
  width: 10px;
  height: 10px;
  border: 1px solid #555;
  border-color: #555 #fff #fff #555;
  background: #fff url("data:image/svg+xml,%3Csvg xmlns='http://www.w3.org/2000/svg' viewBox='0 0 8 8'%3E%3Cpath d='M1 3l2 3 4-5' fill='none' stroke='%23000' stroke-width='1.5'/%3E%3C/svg%3E");
}
.actions {
  display: flex;
  justify-content: flex-end;
  gap: 4px;
  margin-top: -2px;
}
.actions .btn {
  width: 60px;
  height: 19px;
}
.actions .default {
  border-color: #222;
}

/* buffer overview */
.buffers {
  position: absolute;
  left: 585px;
  top: 10px;
  width: 406px;
  height: 254px;
  padding: 0 9px;
  background: #fffdc8;
  border: 1px solid #a8a690;
  color: #222;
  font: 11px/12px "Liberation Sans", sans-serif;
}
.buffers h2 {
  margin: 0;
  padding-top: 9px;
  font: 15px/19px "Liberation Sans", sans-serif;
  text-align: center;
}
.buffers table {
  width: 386px;
  margin-top: 9px;
  table-layout: fixed;
  border-collapse: collapse;
  text-align: center;
}
.c-wide {
  width: 77px;
}
.buffers th, .buffers td {
  height: 19px;
  padding: 0;
  border: 1px solid #8f8f8f;
  font-weight: normal;
}
.buffers tbody th {
  padding-left: 2px;
  text-align: left;
  white-space: nowrap;
}
.buffers .groups th {
  height: 20px;
  font-size: 13px;
  font-weight: bold;
}
.buffers .kinds th {
  height: 39px;
}
.buffers .tall td, .buffers .tall th {
  height: 24px;
}
.buffers .economy {
  background: #7398c8;
}
.buffers .hybrid {
  background: #6cba7c;
}
.buffers .soft {
  background: #eff3f6;
}
.buffers .fx {
  background: #dcebdc;
  border-left: 3px solid #dc2820;
  border-right: 3px solid #dc2820;
  font-weight: bold;
}
.buffers .kinds .fx {
  border-top: 3px solid #dc2820;
  font-weight: normal;
}
.buffers .bottom {
  border-bottom: 3px solid #dc2820;
}
.star::after {
  content: "*";
  color: #4a72b8;
}
.v {
  color: #4a72b8;
}
.a {
  color: #14a040;
}
.h {
  color: #e02c1c;
}
.p {
  color: #a04870;
}
.buffers p {
  margin: 7px 0 0;
  font-size: 9px;
  line-height: 11px;
  text-align: center;
}
```
